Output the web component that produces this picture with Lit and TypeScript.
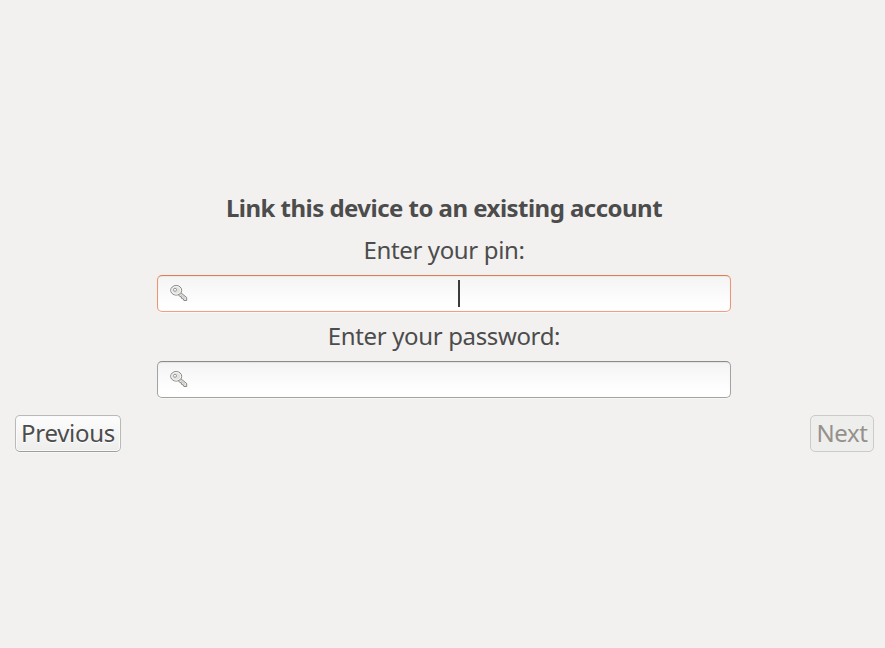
import { LitElement, html, css, svg } from "lit";
import { customElement } from "lit/decorators.js";

@customElement("key-entry")
class KeyEntry extends LitElement {
  static styles = css`
    :host {
      display: flex;
      box-sizing: border-box;
      width: 574px;
      height: 37px;
      padding: 0 12px;
      align-items: center;
      position: relative;
      border: 1px solid #a3a3a1;
      border-top-color: #8c8c8a;
      border-radius: 5px;
      background: linear-gradient(#f4f4f4, #fff 85%);
      box-shadow: 0 1px 0 #f8f8f7, inset 0 1px 1px #e4e4e3;
    }
    :host([focused]) {
      border-color: #eb9574;
      border-top-color: #dd7e5a;
      border-bottom-color: #ee9f88;
      box-shadow: 0 1px 0 #f8f8f7, inset 0 1px 0 #f3e6e0, inset 0 0 1px #f5c9b8;
    }
    .icon {
      display: block;
      width: 18px;
      height: 18px;
      margin-top: -2px;
    }
    .caret {
      position: absolute;
      left: 300px;
      top: 4px;
      width: 2px;
      height: 27px;
      background: #3b3b3b;
    }
  `;
  render() {
    return html`<svg class="icon" viewBox="0 0 18 18">
        ${svg`<path d="M10.4 8.4 L16.7 13.5 V16.5 H13.9 L13.4 14.9 L11.7 14.5 L11.3 12.8 L9.9 12.6 L8 10.2 Z" fill="#e6e7e3" stroke="#858784" stroke-width="1" stroke-linejoin="round"/>
        <ellipse cx="6.2" cy="6.3" rx="5.5" ry="4.8" fill="#e2e3df" stroke="#858784"/>
        <ellipse cx="6.2" cy="6.3" rx="4.5" ry="3.8" fill="none" stroke="#f8f8f7" stroke-width=".9"/>
        <circle cx="5" cy="5.8" r="1.5" fill="#fff" stroke="#8c8e8b" stroke-width=".9"/>
        <path d="M10.3 10.4 L15 14.4" stroke="#c0c2be" stroke-width="1"/>`}
      </svg>
      ${this.hasAttribute("focused") ? html`<div class="caret"></div>` : ""}`;
  }
}

@customElement("app-root")
class AppRoot extends LitElement {
  static styles = css`
    :host {
      display: block;
      box-sizing: border-box;
      height: 648px;
      padding: 193px 11px 0 15px;
      background: #f2f1f0;
      color: #4c4c4c;
      font: 24px/30px "Noto Sans", sans-serif;
      overflow: hidden;
    }
    .form {
      display: flex;
      flex-direction: column;
      align-items: center;
      padding-right: 1px;
    }
    .title,
    .pin,
    .password,
    .label {
      white-space: nowrap;
    }
    .title {
      font-weight: 700;
      letter-spacing: -0.53px;
      margin-bottom: 12px;
    }
    .pin,
    .password {
      letter-spacing: -0.36px;
      margin-bottom: 10px;
    }
    .password {
      margin-top: 9px;
    }
    .nav {
      display: flex;
      justify-content: space-between;
      margin-top: 17px;
    }
    .button {
      display: flex;
      box-sizing: border-box;
      height: 37px;
      justify-content: center;
      padding-top: 2px;
      border: 1px solid #b9b9b7;
      border-bottom-color: #9e9e9c;
      border-radius: 5px;
      background: linear-gradient(#fdfdfd, #ededec);
      box-shadow: 0 1px 0 #f8f8f7, inset 0 0 0 1px #fafafa;
      text-shadow: 0 1px 0 #fff;
      letter-spacing: -0.3px;
    }
    .previous {
      width: 106px;
    }
    .next {
      width: 64px;
      color: #95918c;
      border-color: #cbcbc9;
      background: #eeeeed;
      box-shadow: none;
      text-shadow: none;
      letter-spacing: -0.4px;
    }
  `;
  render() {
    return html`<div class="form">
        <div class="title">Link this device to an existing account</div>
        <div class="pin">Enter your pin:</div>
        <key-entry focused></key-entry>
        <div class="password">Enter your password:</div>
        <key-entry></key-entry>
      </div>
      <div class="nav">
        <div class="button previous"><span class="label">Previous</span></div>
        <div class="button next"><span class="label">Next</span></div>
      </div>`;
  }
}
